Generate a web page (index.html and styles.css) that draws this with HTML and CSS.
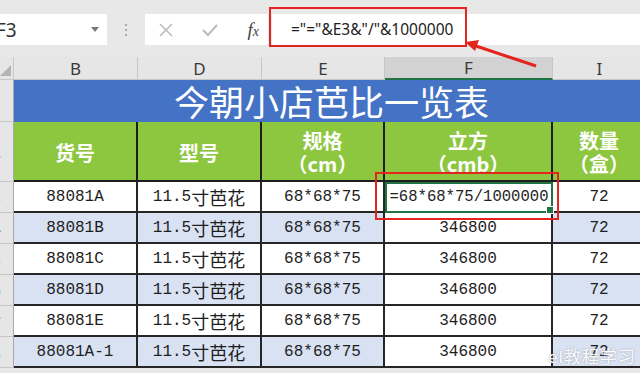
FILE: index.html
```html
<!DOCTYPE html>
<html lang="zh-CN">
  <head>
    <meta charset="utf-8" />
    <title>今朝小店芭比一览表</title>
    <link rel="stylesheet" href="styles.css">
  </head>
  <body>
    <div class="toolbar">
      <div class="namebox"><span class="name">F3</span><span class="drop"></span></div>
      <div class="grip"><i></i><i></i><i></i></div>
      <div class="btns">
        <svg class="ico" width="14" height="14" viewBox="0 0 14 14"><path d="M1 1 L13 13 M13 1 L1 13" stroke="#bcbcbc" stroke-width="1.6" fill="none"/></svg>
        <svg class="ico" width="16" height="14" viewBox="0 0 16 14"><path d="M1 7 L6 12 L15 2" stroke="#bcbcbc" stroke-width="2" fill="none"/></svg>
        <span class="fx">f<small>x</small></span>
      </div>
      <div class="formula">="="&amp;E3&amp;"/"&amp;1000000</div>
    </div>

    <div class="sheet">
      <div class="corner"><span></span></div>
      <div class="ch">B</div>
      <div class="ch">D</div>
      <div class="ch">E</div>
      <div class="ch on">F</div>
      <div class="ch">I</div>

      <div class="rh">1</div>
      <div class="title">今朝小店芭比一览表</div>

      <div class="rh">2</div>
      <div class="hd">货号</div>
      <div class="hd">型号</div>
      <div class="hd">规格<br>（cm）</div>
      <div class="hd">立方<br>（cmb）</div>
      <div class="hd">数量<br>（盒）</div>

      <div class="rh">3</div>
      <div class="c">88081A</div>
      <div class="c">11.5<span class="hz">寸芭花</span></div>
      <div class="c">68*68*75</div>
      <div class="c f active">=68*68*75/1000000</div>
      <div class="c">72</div>

      <div class="rh">4</div>
      <div class="c alt">88081B</div>
      <div class="c alt">11.5<span class="hz">寸芭花</span></div>
      <div class="c alt">68*68*75</div>
      <div class="c f">346800</div>
      <div class="c alt">72</div>

      <div class="rh">5</div>
      <div class="c">88081C</div>
      <div class="c">11.5<span class="hz">寸芭花</span></div>
      <div class="c">68*68*75</div>
      <div class="c f">346800</div>
      <div class="c">72</div>

      <div class="rh">6</div>
      <div class="c alt">88081D</div>
      <div class="c alt">11.5<span class="hz">寸芭花</span></div>
      <div class="c alt">68*68*75</div>
      <div class="c f">346800</div>
      <div class="c alt">72</div>

      <div class="rh">7</div>
      <div class="c">88081E</div>
      <div class="c">11.5<span class="hz">寸芭花</span></div>
      <div class="c">68*68*75</div>
      <div class="c f">346800</div>
      <div class="c">72</div>

      <div class="rh">8</div>
      <div class="c alt">88081A-1</div>
      <div class="c alt">11.5<span class="hz">寸芭花</span></div>
      <div class="c alt">68*68*75</div>
      <div class="c f">346800</div>
      <div class="c alt">72</div>
    </div>

    <!-- annotations drawn over the screenshot -->
    <div class="mark mark-bar"></div>
    <div class="mark mark-cell"></div>
    <svg class="arrow" width="80" height="40" viewBox="0 0 80 40">
      <path d="M74 30 L14 10" stroke="#e3241f" stroke-width="3" fill="none"/>
      <path d="M3 6 L17 4 L13 15 Z" fill="#e3241f"/>
    </svg>
    <div class="wm">el教程学习</div>
  </body>
</html>
```

FILE: styles.css
```css
* {
  box-sizing: border-box;
}
body {
  margin: 0;
  width: 640px;
  height: 373px;
  overflow: hidden;
  position: relative;
  background: #e8e8e8;
  font-family: "Noto Sans", "Noto Sans CJK SC", sans-serif;
  color: #222;
}

/* formula bar */
.toolbar {
  display: flex;
  height: 57px;
  padding-top: 14px;
}
.namebox {
  width: 107px;
  height: 31px;
  background: #fff;
  display: flex;
  align-items: center;
  justify-content: space-between;
  padding-right: 8px;
  overflow: hidden;
}
.namebox .name {
  font-size: 19px;
  color: #333;
  margin-left: -4px;
}
.drop {
  width: 0;
  height: 0;
  border-left: 4px solid transparent;
  border-right: 4px solid transparent;
  border-top: 5px solid #7a7a7a;
}
.grip {
  width: 38px;
  height: 31px;
  display: flex;
  flex-direction: column;
  align-items: center;
  justify-content: center;
  gap: 3px;
}
.grip i {
  width: 2px;
  height: 2px;
  background: #a8a8a8;
}
.btns {
  width: 123px;
  height: 31px;
  background: #fff;
  display: flex;
  align-items: center;
  justify-content: space-between;
  padding: 0 9px 0 14px;
}
.fx {
  font-family: "Liberation Serif", serif;
  font-style: italic;
  font-size: 19px;
  color: #444;
}
.fx small {
  font-size: 14px;
}
.formula {
  flex: 1;
  height: 31px;
  margin-left: 4px;
  background: #fff;
  font-size: 15.5px;
  line-height: 31px;
  padding-left: 19px;
  color: #222;
  white-space: nowrap;
}

/* sheet */
.sheet {
  display: grid;
  grid-template-columns: 14px 124px 124px 123px 168px 94px;
  grid-template-rows: 23px 42px 60px repeat(6, 31px);
}
.corner {
  background: #e6e6e6;
  border-right: 1px solid #c6c6c6;
  border-bottom: 1px solid #c6c6c6;
  position: relative;
}
.corner span {
  position: absolute;
  right: 2px;
  bottom: 3px;
  width: 0;
  height: 0;
  border-left: 11px solid transparent;
  border-bottom: 11px solid #b4b4b4;
}
.ch {
  background: #e6e6e6;
  border-right: 1px solid #c6c6c6;
  border-bottom: 1px solid #c6c6c6;
  font-size: 17px;
  color: #3a3a3a;
  display: flex;
  align-items: center;
  justify-content: center;
}
.ch.on {
  background: #d2d2d2;
  border-bottom: 2px solid #217346;
}
.rh {
  background: #e6e6e6;
  border-right: 1px solid #a9a9a9;
  border-bottom: 1px solid #c6c6c6;
  overflow: hidden;
  font-size: 15px;
  font-weight: bold;
  color: #555;
  text-indent: -8px;
  display: flex;
  align-items: center;
}
.title {
  grid-column: 2 / 7;
  background: #4472c4;
  color: #fff;
  font-family: "Noto Sans CJK SC", sans-serif;
  font-size: 35px;
  line-height: 42px;
  text-align: center;
  padding-left: 2px;
}
.hd {
  background: #8dc63f;
  color: #fff;
  font-family: "Noto Sans CJK SC", sans-serif;
  font-weight: bold;
  font-size: 20px;
  line-height: 23px;
  text-align: center;
  display: flex;
  align-items: center;
  justify-content: center;
  border-right: 2px solid #1e1e1e;
  border-bottom: 2px solid #1e1e1e;
  padding-top: 2px;
}
.c {
  background: #fff;
  font-family: "Liberation Mono", "Noto Sans CJK SC", monospace;
  font-size: 16px;
  color: #1e1e1e;
  display: flex;
  align-items: center;
  justify-content: center;
  border-right: 2px solid #262626;
  border-bottom: 2px solid #262626;
  white-space: nowrap;
}
.c.alt {
  background: #d9e2f3;
}
.c.f {
  background: #fff;
}
.hz {
  font-family: "Noto Sans CJK SC", sans-serif;
  font-size: 18px;
}
.c.active {
  position: relative;
  font-size: 15.6px;
  padding-left: 2px;
  outline: 2px solid #217346;
  outline-offset: -2px;
}
.c.active::after {
  content: "";
  position: absolute;
  right: -3px;
  bottom: -3px;
  width: 6px;
  height: 6px;
  background: #217346;
  border: 1px solid #fff;
}

/* red annotations */
.mark {
  position: absolute;
  border: 2px solid #e3241f;
}
.mark-bar {
  left: 269px;
  top: 7px;
  width: 198px;
  height: 40px;
}
.mark-cell {
  left: 375px;
  top: 172px;
  width: 184px;
  height: 48px;
}
.arrow {
  position: absolute;
  left: 462px;
  top: 36px;
}
.wm {
  position: absolute;
  left: 548px;
  top: 343px;
  font-size: 17px;
  color: rgba(255, 255, 255, 0.95);
  text-shadow: 0 0 2px rgba(110, 110, 110, 0.6);
  letter-spacing: 1px;
}
```
